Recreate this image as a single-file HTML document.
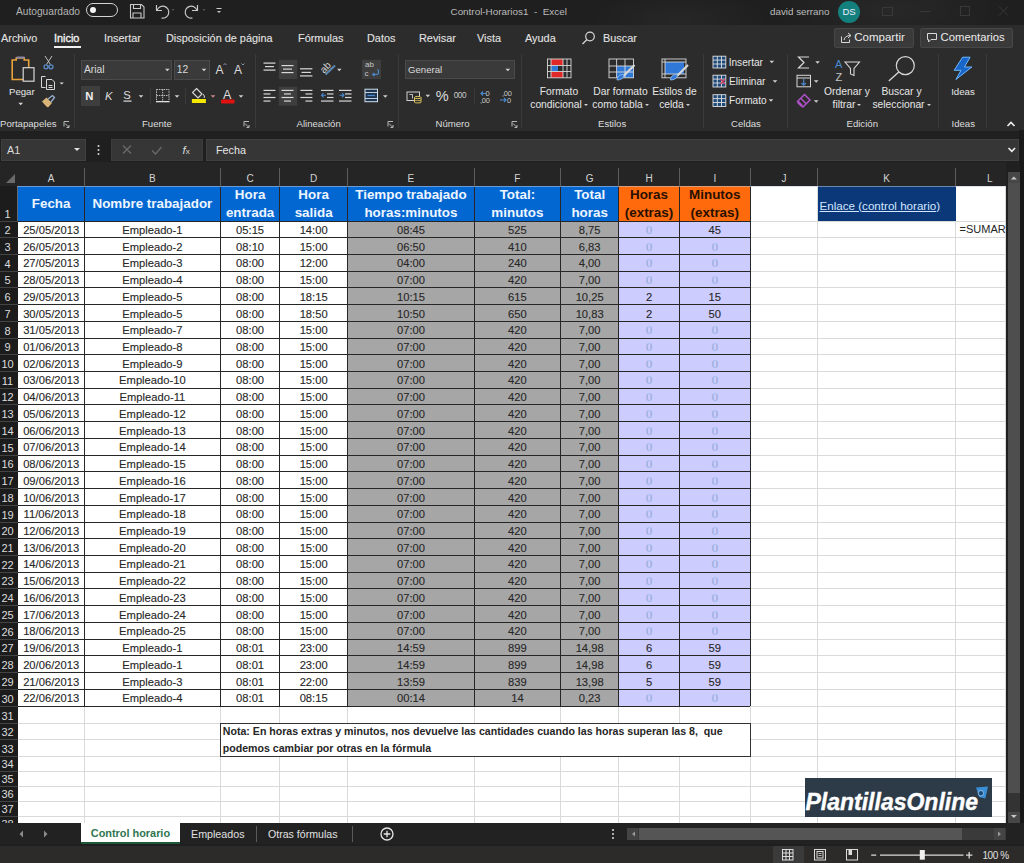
<!DOCTYPE html><html><head><meta charset="utf-8"><style>
*{margin:0;padding:0;box-sizing:border-box}
html,body{width:1024px;height:863px;overflow:hidden;background:#1f1f1f;font-family:"Liberation Sans",sans-serif}
.a{position:absolute}
.t{position:absolute;white-space:nowrap;color:#e6e6e6;font-size:11px;line-height:1}
.c{position:absolute;white-space:nowrap;font-size:11.2px;color:#2a2a2a;-webkit-text-stroke:0.12px #2a2a2a;padding-top:1.2px;text-align:center;display:flex;align-items:center;justify-content:center;overflow:hidden}
.hd{position:absolute;color:#eef6ff;font-weight:bold;font-size:13.4px;line-height:18px;padding-top:0.6px;text-align:center;display:flex;align-items:center;justify-content:center;white-space:nowrap}
svg{position:absolute;overflow:visible}
</style></head><body>

<div class="a" style="left:18.00px;top:185.50px;width:987.60px;height:637.50px;background:#fff"></div>
<div class="a" style="left:83.80px;top:185.50px;width:1px;height:637.50px;background:#dadada"></div>
<div class="a" style="left:220.00px;top:185.50px;width:1px;height:637.50px;background:#dadada"></div>
<div class="a" style="left:279.20px;top:185.50px;width:1px;height:637.50px;background:#dadada"></div>
<div class="a" style="left:347.10px;top:185.50px;width:1px;height:637.50px;background:#dadada"></div>
<div class="a" style="left:473.80px;top:185.50px;width:1px;height:637.50px;background:#dadada"></div>
<div class="a" style="left:560.00px;top:185.50px;width:1px;height:637.50px;background:#dadada"></div>
<div class="a" style="left:618.30px;top:185.50px;width:1px;height:637.50px;background:#dadada"></div>
<div class="a" style="left:678.70px;top:185.50px;width:1px;height:637.50px;background:#dadada"></div>
<div class="a" style="left:749.90px;top:185.50px;width:1px;height:637.50px;background:#dadada"></div>
<div class="a" style="left:817.10px;top:185.50px;width:1px;height:637.50px;background:#dadada"></div>
<div class="a" style="left:955.10px;top:185.50px;width:1px;height:637.50px;background:#dadada"></div>
<div class="a" style="left:1005.10px;top:185.50px;width:1px;height:637.50px;background:#dadada"></div>
<div class="a" style="left:18.00px;top:220.50px;width:987.60px;height:1px;background:#dadada"></div>
<div class="a" style="left:18.00px;top:237.22px;width:987.60px;height:1px;background:#dadada"></div>
<div class="a" style="left:18.00px;top:253.95px;width:987.60px;height:1px;background:#dadada"></div>
<div class="a" style="left:18.00px;top:270.67px;width:987.60px;height:1px;background:#dadada"></div>
<div class="a" style="left:18.00px;top:287.40px;width:987.60px;height:1px;background:#dadada"></div>
<div class="a" style="left:18.00px;top:304.12px;width:987.60px;height:1px;background:#dadada"></div>
<div class="a" style="left:18.00px;top:320.84px;width:987.60px;height:1px;background:#dadada"></div>
<div class="a" style="left:18.00px;top:337.57px;width:987.60px;height:1px;background:#dadada"></div>
<div class="a" style="left:18.00px;top:354.29px;width:987.60px;height:1px;background:#dadada"></div>
<div class="a" style="left:18.00px;top:371.02px;width:987.60px;height:1px;background:#dadada"></div>
<div class="a" style="left:18.00px;top:387.74px;width:987.60px;height:1px;background:#dadada"></div>
<div class="a" style="left:18.00px;top:404.47px;width:987.60px;height:1px;background:#dadada"></div>
<div class="a" style="left:18.00px;top:421.19px;width:987.60px;height:1px;background:#dadada"></div>
<div class="a" style="left:18.00px;top:437.91px;width:987.60px;height:1px;background:#dadada"></div>
<div class="a" style="left:18.00px;top:454.64px;width:987.60px;height:1px;background:#dadada"></div>
<div class="a" style="left:18.00px;top:471.36px;width:987.60px;height:1px;background:#dadada"></div>
<div class="a" style="left:18.00px;top:488.09px;width:987.60px;height:1px;background:#dadada"></div>
<div class="a" style="left:18.00px;top:504.81px;width:987.60px;height:1px;background:#dadada"></div>
<div class="a" style="left:18.00px;top:521.53px;width:987.60px;height:1px;background:#dadada"></div>
<div class="a" style="left:18.00px;top:538.26px;width:987.60px;height:1px;background:#dadada"></div>
<div class="a" style="left:18.00px;top:554.98px;width:987.60px;height:1px;background:#dadada"></div>
<div class="a" style="left:18.00px;top:571.71px;width:987.60px;height:1px;background:#dadada"></div>
<div class="a" style="left:18.00px;top:588.43px;width:987.60px;height:1px;background:#dadada"></div>
<div class="a" style="left:18.00px;top:605.16px;width:987.60px;height:1px;background:#dadada"></div>
<div class="a" style="left:18.00px;top:621.88px;width:987.60px;height:1px;background:#dadada"></div>
<div class="a" style="left:18.00px;top:638.60px;width:987.60px;height:1px;background:#dadada"></div>
<div class="a" style="left:18.00px;top:655.33px;width:987.60px;height:1px;background:#dadada"></div>
<div class="a" style="left:18.00px;top:672.05px;width:987.60px;height:1px;background:#dadada"></div>
<div class="a" style="left:18.00px;top:688.78px;width:987.60px;height:1px;background:#dadada"></div>
<div class="a" style="left:18.00px;top:705.50px;width:987.60px;height:1px;background:#dadada"></div>
<div class="a" style="left:18.00px;top:722.50px;width:987.60px;height:1px;background:#dadada"></div>
<div class="a" style="left:18.00px;top:739.00px;width:987.60px;height:1px;background:#dadada"></div>
<div class="a" style="left:18.00px;top:756.10px;width:987.60px;height:1px;background:#dadada"></div>
<div class="a" style="left:18.00px;top:771.10px;width:987.60px;height:1px;background:#dadada"></div>
<div class="a" style="left:18.00px;top:786.10px;width:987.60px;height:1px;background:#dadada"></div>
<div class="a" style="left:18.00px;top:801.10px;width:987.60px;height:1px;background:#dadada"></div>
<div class="a" style="left:18.00px;top:816.10px;width:987.60px;height:1px;background:#dadada"></div>
<div class="hd" style="left:18.00px;top:185.50px;width:66.30px;height:35.50px;background:#0367d2;color:#eef6ff">Fecha</div>
<div class="hd" style="left:84.30px;top:185.50px;width:136.20px;height:35.50px;background:#0367d2;color:#eef6ff">Nombre trabajador</div>
<div class="hd" style="left:220.50px;top:185.50px;width:59.20px;height:35.50px;background:#0367d2;color:#eef6ff">Hora<br>entrada</div>
<div class="hd" style="left:279.70px;top:185.50px;width:67.90px;height:35.50px;background:#0367d2;color:#eef6ff">Hora<br>salida</div>
<div class="hd" style="left:347.60px;top:185.50px;width:126.70px;height:35.50px;background:#0367d2;color:#eef6ff">Tiempo trabajado<br>horas:minutos</div>
<div class="hd" style="left:474.30px;top:185.50px;width:86.20px;height:35.50px;background:#0367d2;color:#eef6ff">Total:<br>minutos</div>
<div class="hd" style="left:560.50px;top:185.50px;width:58.30px;height:35.50px;background:#0367d2;color:#eef6ff">Total<br>horas</div>
<div class="hd" style="left:618.80px;top:185.50px;width:60.40px;height:35.50px;background:#ff6a0c;color:#2a1000">Horas<br>(extras)</div>
<div class="hd" style="left:679.20px;top:185.50px;width:71.20px;height:35.50px;background:#ff6a0c;color:#2a1000">Minutos<br>(extras)</div>
<div class="a" style="left:817.60px;top:185.50px;width:138.00px;height:35.50px;background:#0a3878"></div>
<div class="t" style="left:819.60px;top:199.50px;color:#d4e6ff;font-size:11.6px;text-decoration:underline">Enlace (control horario)</div>
<div class="c" style="left:18.00px;top:221.00px;width:66.30px;height:16.72px;background:#fff;color:#262626">25/05/2013</div>
<div class="c" style="left:84.30px;top:221.00px;width:136.20px;height:16.72px;background:#fff;color:#262626">Empleado-1</div>
<div class="c" style="left:220.50px;top:221.00px;width:59.20px;height:16.72px;background:#fff;color:#262626">05:15</div>
<div class="c" style="left:279.70px;top:221.00px;width:67.90px;height:16.72px;background:#fff;color:#262626">14:00</div>
<div class="c" style="left:347.60px;top:221.00px;width:126.70px;height:16.72px;background:#a6a6a6;color:#262626">08:45</div>
<div class="c" style="left:474.30px;top:221.00px;width:86.20px;height:16.72px;background:#a6a6a6;color:#262626">525</div>
<div class="c" style="left:560.50px;top:221.00px;width:58.30px;height:16.72px;background:#a6a6a6;color:#262626">8,75</div>
<div class="c" style="left:618.80px;top:221.00px;width:60.40px;height:16.72px;background:#ccccff;color:#a8c4f4">0</div>
<div class="c" style="left:679.20px;top:221.00px;width:71.20px;height:16.72px;background:#ccccff;color:#262626">45</div>
<div class="c" style="left:18.00px;top:237.72px;width:66.30px;height:16.72px;background:#fff;color:#262626">26/05/2013</div>
<div class="c" style="left:84.30px;top:237.72px;width:136.20px;height:16.72px;background:#fff;color:#262626">Empleado-2</div>
<div class="c" style="left:220.50px;top:237.72px;width:59.20px;height:16.72px;background:#fff;color:#262626">08:10</div>
<div class="c" style="left:279.70px;top:237.72px;width:67.90px;height:16.72px;background:#fff;color:#262626">15:00</div>
<div class="c" style="left:347.60px;top:237.72px;width:126.70px;height:16.72px;background:#a6a6a6;color:#262626">06:50</div>
<div class="c" style="left:474.30px;top:237.72px;width:86.20px;height:16.72px;background:#a6a6a6;color:#262626">410</div>
<div class="c" style="left:560.50px;top:237.72px;width:58.30px;height:16.72px;background:#a6a6a6;color:#262626">6,83</div>
<div class="c" style="left:618.80px;top:237.72px;width:60.40px;height:16.72px;background:#ccccff;color:#a8c4f4">0</div>
<div class="c" style="left:679.20px;top:237.72px;width:71.20px;height:16.72px;background:#ccccff;color:#a8c4f4">0</div>
<div class="c" style="left:18.00px;top:254.45px;width:66.30px;height:16.72px;background:#fff;color:#262626">27/05/2013</div>
<div class="c" style="left:84.30px;top:254.45px;width:136.20px;height:16.72px;background:#fff;color:#262626">Empleado-3</div>
<div class="c" style="left:220.50px;top:254.45px;width:59.20px;height:16.72px;background:#fff;color:#262626">08:00</div>
<div class="c" style="left:279.70px;top:254.45px;width:67.90px;height:16.72px;background:#fff;color:#262626">12:00</div>
<div class="c" style="left:347.60px;top:254.45px;width:126.70px;height:16.72px;background:#a6a6a6;color:#262626">04:00</div>
<div class="c" style="left:474.30px;top:254.45px;width:86.20px;height:16.72px;background:#a6a6a6;color:#262626">240</div>
<div class="c" style="left:560.50px;top:254.45px;width:58.30px;height:16.72px;background:#a6a6a6;color:#262626">4,00</div>
<div class="c" style="left:618.80px;top:254.45px;width:60.40px;height:16.72px;background:#ccccff;color:#a8c4f4">0</div>
<div class="c" style="left:679.20px;top:254.45px;width:71.20px;height:16.72px;background:#ccccff;color:#a8c4f4">0</div>
<div class="c" style="left:18.00px;top:271.17px;width:66.30px;height:16.72px;background:#fff;color:#262626">28/05/2013</div>
<div class="c" style="left:84.30px;top:271.17px;width:136.20px;height:16.72px;background:#fff;color:#262626">Empleado-4</div>
<div class="c" style="left:220.50px;top:271.17px;width:59.20px;height:16.72px;background:#fff;color:#262626">08:00</div>
<div class="c" style="left:279.70px;top:271.17px;width:67.90px;height:16.72px;background:#fff;color:#262626">15:00</div>
<div class="c" style="left:347.60px;top:271.17px;width:126.70px;height:16.72px;background:#a6a6a6;color:#262626">07:00</div>
<div class="c" style="left:474.30px;top:271.17px;width:86.20px;height:16.72px;background:#a6a6a6;color:#262626">420</div>
<div class="c" style="left:560.50px;top:271.17px;width:58.30px;height:16.72px;background:#a6a6a6;color:#262626">7,00</div>
<div class="c" style="left:618.80px;top:271.17px;width:60.40px;height:16.72px;background:#ccccff;color:#a8c4f4">0</div>
<div class="c" style="left:679.20px;top:271.17px;width:71.20px;height:16.72px;background:#ccccff;color:#a8c4f4">0</div>
<div class="c" style="left:18.00px;top:287.90px;width:66.30px;height:16.72px;background:#fff;color:#262626">29/05/2013</div>
<div class="c" style="left:84.30px;top:287.90px;width:136.20px;height:16.72px;background:#fff;color:#262626">Empleado-5</div>
<div class="c" style="left:220.50px;top:287.90px;width:59.20px;height:16.72px;background:#fff;color:#262626">08:00</div>
<div class="c" style="left:279.70px;top:287.90px;width:67.90px;height:16.72px;background:#fff;color:#262626">18:15</div>
<div class="c" style="left:347.60px;top:287.90px;width:126.70px;height:16.72px;background:#a6a6a6;color:#262626">10:15</div>
<div class="c" style="left:474.30px;top:287.90px;width:86.20px;height:16.72px;background:#a6a6a6;color:#262626">615</div>
<div class="c" style="left:560.50px;top:287.90px;width:58.30px;height:16.72px;background:#a6a6a6;color:#262626">10,25</div>
<div class="c" style="left:618.80px;top:287.90px;width:60.40px;height:16.72px;background:#ccccff;color:#262626">2</div>
<div class="c" style="left:679.20px;top:287.90px;width:71.20px;height:16.72px;background:#ccccff;color:#262626">15</div>
<div class="c" style="left:18.00px;top:304.62px;width:66.30px;height:16.72px;background:#fff;color:#262626">30/05/2013</div>
<div class="c" style="left:84.30px;top:304.62px;width:136.20px;height:16.72px;background:#fff;color:#262626">Empleado-5</div>
<div class="c" style="left:220.50px;top:304.62px;width:59.20px;height:16.72px;background:#fff;color:#262626">08:00</div>
<div class="c" style="left:279.70px;top:304.62px;width:67.90px;height:16.72px;background:#fff;color:#262626">18:50</div>
<div class="c" style="left:347.60px;top:304.62px;width:126.70px;height:16.72px;background:#a6a6a6;color:#262626">10:50</div>
<div class="c" style="left:474.30px;top:304.62px;width:86.20px;height:16.72px;background:#a6a6a6;color:#262626">650</div>
<div class="c" style="left:560.50px;top:304.62px;width:58.30px;height:16.72px;background:#a6a6a6;color:#262626">10,83</div>
<div class="c" style="left:618.80px;top:304.62px;width:60.40px;height:16.72px;background:#ccccff;color:#262626">2</div>
<div class="c" style="left:679.20px;top:304.62px;width:71.20px;height:16.72px;background:#ccccff;color:#262626">50</div>
<div class="c" style="left:18.00px;top:321.34px;width:66.30px;height:16.72px;background:#fff;color:#262626">31/05/2013</div>
<div class="c" style="left:84.30px;top:321.34px;width:136.20px;height:16.72px;background:#fff;color:#262626">Empleado-7</div>
<div class="c" style="left:220.50px;top:321.34px;width:59.20px;height:16.72px;background:#fff;color:#262626">08:00</div>
<div class="c" style="left:279.70px;top:321.34px;width:67.90px;height:16.72px;background:#fff;color:#262626">15:00</div>
<div class="c" style="left:347.60px;top:321.34px;width:126.70px;height:16.72px;background:#a6a6a6;color:#262626">07:00</div>
<div class="c" style="left:474.30px;top:321.34px;width:86.20px;height:16.72px;background:#a6a6a6;color:#262626">420</div>
<div class="c" style="left:560.50px;top:321.34px;width:58.30px;height:16.72px;background:#a6a6a6;color:#262626">7,00</div>
<div class="c" style="left:618.80px;top:321.34px;width:60.40px;height:16.72px;background:#ccccff;color:#a8c4f4">0</div>
<div class="c" style="left:679.20px;top:321.34px;width:71.20px;height:16.72px;background:#ccccff;color:#a8c4f4">0</div>
<div class="c" style="left:18.00px;top:338.07px;width:66.30px;height:16.72px;background:#fff;color:#262626">01/06/2013</div>
<div class="c" style="left:84.30px;top:338.07px;width:136.20px;height:16.72px;background:#fff;color:#262626">Empleado-8</div>
<div class="c" style="left:220.50px;top:338.07px;width:59.20px;height:16.72px;background:#fff;color:#262626">08:00</div>
<div class="c" style="left:279.70px;top:338.07px;width:67.90px;height:16.72px;background:#fff;color:#262626">15:00</div>
<div class="c" style="left:347.60px;top:338.07px;width:126.70px;height:16.72px;background:#a6a6a6;color:#262626">07:00</div>
<div class="c" style="left:474.30px;top:338.07px;width:86.20px;height:16.72px;background:#a6a6a6;color:#262626">420</div>
<div class="c" style="left:560.50px;top:338.07px;width:58.30px;height:16.72px;background:#a6a6a6;color:#262626">7,00</div>
<div class="c" style="left:618.80px;top:338.07px;width:60.40px;height:16.72px;background:#ccccff;color:#a8c4f4">0</div>
<div class="c" style="left:679.20px;top:338.07px;width:71.20px;height:16.72px;background:#ccccff;color:#a8c4f4">0</div>
<div class="c" style="left:18.00px;top:354.79px;width:66.30px;height:16.72px;background:#fff;color:#262626">02/06/2013</div>
<div class="c" style="left:84.30px;top:354.79px;width:136.20px;height:16.72px;background:#fff;color:#262626">Empleado-9</div>
<div class="c" style="left:220.50px;top:354.79px;width:59.20px;height:16.72px;background:#fff;color:#262626">08:00</div>
<div class="c" style="left:279.70px;top:354.79px;width:67.90px;height:16.72px;background:#fff;color:#262626">15:00</div>
<div class="c" style="left:347.60px;top:354.79px;width:126.70px;height:16.72px;background:#a6a6a6;color:#262626">07:00</div>
<div class="c" style="left:474.30px;top:354.79px;width:86.20px;height:16.72px;background:#a6a6a6;color:#262626">420</div>
<div class="c" style="left:560.50px;top:354.79px;width:58.30px;height:16.72px;background:#a6a6a6;color:#262626">7,00</div>
<div class="c" style="left:618.80px;top:354.79px;width:60.40px;height:16.72px;background:#ccccff;color:#a8c4f4">0</div>
<div class="c" style="left:679.20px;top:354.79px;width:71.20px;height:16.72px;background:#ccccff;color:#a8c4f4">0</div>
<div class="c" style="left:18.00px;top:371.52px;width:66.30px;height:16.72px;background:#fff;color:#262626">03/06/2013</div>
<div class="c" style="left:84.30px;top:371.52px;width:136.20px;height:16.72px;background:#fff;color:#262626">Empleado-10</div>
<div class="c" style="left:220.50px;top:371.52px;width:59.20px;height:16.72px;background:#fff;color:#262626">08:00</div>
<div class="c" style="left:279.70px;top:371.52px;width:67.90px;height:16.72px;background:#fff;color:#262626">15:00</div>
<div class="c" style="left:347.60px;top:371.52px;width:126.70px;height:16.72px;background:#a6a6a6;color:#262626">07:00</div>
<div class="c" style="left:474.30px;top:371.52px;width:86.20px;height:16.72px;background:#a6a6a6;color:#262626">420</div>
<div class="c" style="left:560.50px;top:371.52px;width:58.30px;height:16.72px;background:#a6a6a6;color:#262626">7,00</div>
<div class="c" style="left:618.80px;top:371.52px;width:60.40px;height:16.72px;background:#ccccff;color:#a8c4f4">0</div>
<div class="c" style="left:679.20px;top:371.52px;width:71.20px;height:16.72px;background:#ccccff;color:#a8c4f4">0</div>
<div class="c" style="left:18.00px;top:388.24px;width:66.30px;height:16.72px;background:#fff;color:#262626">04/06/2013</div>
<div class="c" style="left:84.30px;top:388.24px;width:136.20px;height:16.72px;background:#fff;color:#262626">Empleado-11</div>
<div class="c" style="left:220.50px;top:388.24px;width:59.20px;height:16.72px;background:#fff;color:#262626">08:00</div>
<div class="c" style="left:279.70px;top:388.24px;width:67.90px;height:16.72px;background:#fff;color:#262626">15:00</div>
<div class="c" style="left:347.60px;top:388.24px;width:126.70px;height:16.72px;background:#a6a6a6;color:#262626">07:00</div>
<div class="c" style="left:474.30px;top:388.24px;width:86.20px;height:16.72px;background:#a6a6a6;color:#262626">420</div>
<div class="c" style="left:560.50px;top:388.24px;width:58.30px;height:16.72px;background:#a6a6a6;color:#262626">7,00</div>
<div class="c" style="left:618.80px;top:388.24px;width:60.40px;height:16.72px;background:#ccccff;color:#a8c4f4">0</div>
<div class="c" style="left:679.20px;top:388.24px;width:71.20px;height:16.72px;background:#ccccff;color:#a8c4f4">0</div>
<div class="c" style="left:18.00px;top:404.97px;width:66.30px;height:16.72px;background:#fff;color:#262626">05/06/2013</div>
<div class="c" style="left:84.30px;top:404.97px;width:136.20px;height:16.72px;background:#fff;color:#262626">Empleado-12</div>
<div class="c" style="left:220.50px;top:404.97px;width:59.20px;height:16.72px;background:#fff;color:#262626">08:00</div>
<div class="c" style="left:279.70px;top:404.97px;width:67.90px;height:16.72px;background:#fff;color:#262626">15:00</div>
<div class="c" style="left:347.60px;top:404.97px;width:126.70px;height:16.72px;background:#a6a6a6;color:#262626">07:00</div>
<div class="c" style="left:474.30px;top:404.97px;width:86.20px;height:16.72px;background:#a6a6a6;color:#262626">420</div>
<div class="c" style="left:560.50px;top:404.97px;width:58.30px;height:16.72px;background:#a6a6a6;color:#262626">7,00</div>
<div class="c" style="left:618.80px;top:404.97px;width:60.40px;height:16.72px;background:#ccccff;color:#a8c4f4">0</div>
<div class="c" style="left:679.20px;top:404.97px;width:71.20px;height:16.72px;background:#ccccff;color:#a8c4f4">0</div>
<div class="c" style="left:18.00px;top:421.69px;width:66.30px;height:16.72px;background:#fff;color:#262626">06/06/2013</div>
<div class="c" style="left:84.30px;top:421.69px;width:136.20px;height:16.72px;background:#fff;color:#262626">Empleado-13</div>
<div class="c" style="left:220.50px;top:421.69px;width:59.20px;height:16.72px;background:#fff;color:#262626">08:00</div>
<div class="c" style="left:279.70px;top:421.69px;width:67.90px;height:16.72px;background:#fff;color:#262626">15:00</div>
<div class="c" style="left:347.60px;top:421.69px;width:126.70px;height:16.72px;background:#a6a6a6;color:#262626">07:00</div>
<div class="c" style="left:474.30px;top:421.69px;width:86.20px;height:16.72px;background:#a6a6a6;color:#262626">420</div>
<div class="c" style="left:560.50px;top:421.69px;width:58.30px;height:16.72px;background:#a6a6a6;color:#262626">7,00</div>
<div class="c" style="left:618.80px;top:421.69px;width:60.40px;height:16.72px;background:#ccccff;color:#a8c4f4">0</div>
<div class="c" style="left:679.20px;top:421.69px;width:71.20px;height:16.72px;background:#ccccff;color:#a8c4f4">0</div>
<div class="c" style="left:18.00px;top:438.41px;width:66.30px;height:16.72px;background:#fff;color:#262626">07/06/2013</div>
<div class="c" style="left:84.30px;top:438.41px;width:136.20px;height:16.72px;background:#fff;color:#262626">Empleado-14</div>
<div class="c" style="left:220.50px;top:438.41px;width:59.20px;height:16.72px;background:#fff;color:#262626">08:00</div>
<div class="c" style="left:279.70px;top:438.41px;width:67.90px;height:16.72px;background:#fff;color:#262626">15:00</div>
<div class="c" style="left:347.60px;top:438.41px;width:126.70px;height:16.72px;background:#a6a6a6;color:#262626">07:00</div>
<div class="c" style="left:474.30px;top:438.41px;width:86.20px;height:16.72px;background:#a6a6a6;color:#262626">420</div>
<div class="c" style="left:560.50px;top:438.41px;width:58.30px;height:16.72px;background:#a6a6a6;color:#262626">7,00</div>
<div class="c" style="left:618.80px;top:438.41px;width:60.40px;height:16.72px;background:#ccccff;color:#a8c4f4">0</div>
<div class="c" style="left:679.20px;top:438.41px;width:71.20px;height:16.72px;background:#ccccff;color:#a8c4f4">0</div>
<div class="c" style="left:18.00px;top:455.14px;width:66.30px;height:16.72px;background:#fff;color:#262626">08/06/2013</div>
<div class="c" style="left:84.30px;top:455.14px;width:136.20px;height:16.72px;background:#fff;color:#262626">Empleado-15</div>
<div class="c" style="left:220.50px;top:455.14px;width:59.20px;height:16.72px;background:#fff;color:#262626">08:00</div>
<div class="c" style="left:279.70px;top:455.14px;width:67.90px;height:16.72px;background:#fff;color:#262626">15:00</div>
<div class="c" style="left:347.60px;top:455.14px;width:126.70px;height:16.72px;background:#a6a6a6;color:#262626">07:00</div>
<div class="c" style="left:474.30px;top:455.14px;width:86.20px;height:16.72px;background:#a6a6a6;color:#262626">420</div>
<div class="c" style="left:560.50px;top:455.14px;width:58.30px;height:16.72px;background:#a6a6a6;color:#262626">7,00</div>
<div class="c" style="left:618.80px;top:455.14px;width:60.40px;height:16.72px;background:#ccccff;color:#a8c4f4">0</div>
<div class="c" style="left:679.20px;top:455.14px;width:71.20px;height:16.72px;background:#ccccff;color:#a8c4f4">0</div>
<div class="c" style="left:18.00px;top:471.86px;width:66.30px;height:16.72px;background:#fff;color:#262626">09/06/2013</div>
<div class="c" style="left:84.30px;top:471.86px;width:136.20px;height:16.72px;background:#fff;color:#262626">Empleado-16</div>
<div class="c" style="left:220.50px;top:471.86px;width:59.20px;height:16.72px;background:#fff;color:#262626">08:00</div>
<div class="c" style="left:279.70px;top:471.86px;width:67.90px;height:16.72px;background:#fff;color:#262626">15:00</div>
<div class="c" style="left:347.60px;top:471.86px;width:126.70px;height:16.72px;background:#a6a6a6;color:#262626">07:00</div>
<div class="c" style="left:474.30px;top:471.86px;width:86.20px;height:16.72px;background:#a6a6a6;color:#262626">420</div>
<div class="c" style="left:560.50px;top:471.86px;width:58.30px;height:16.72px;background:#a6a6a6;color:#262626">7,00</div>
<div class="c" style="left:618.80px;top:471.86px;width:60.40px;height:16.72px;background:#ccccff;color:#a8c4f4">0</div>
<div class="c" style="left:679.20px;top:471.86px;width:71.20px;height:16.72px;background:#ccccff;color:#a8c4f4">0</div>
<div class="c" style="left:18.00px;top:488.59px;width:66.30px;height:16.72px;background:#fff;color:#262626">10/06/2013</div>
<div class="c" style="left:84.30px;top:488.59px;width:136.20px;height:16.72px;background:#fff;color:#262626">Empleado-17</div>
<div class="c" style="left:220.50px;top:488.59px;width:59.20px;height:16.72px;background:#fff;color:#262626">08:00</div>
<div class="c" style="left:279.70px;top:488.59px;width:67.90px;height:16.72px;background:#fff;color:#262626">15:00</div>
<div class="c" style="left:347.60px;top:488.59px;width:126.70px;height:16.72px;background:#a6a6a6;color:#262626">07:00</div>
<div class="c" style="left:474.30px;top:488.59px;width:86.20px;height:16.72px;background:#a6a6a6;color:#262626">420</div>
<div class="c" style="left:560.50px;top:488.59px;width:58.30px;height:16.72px;background:#a6a6a6;color:#262626">7,00</div>
<div class="c" style="left:618.80px;top:488.59px;width:60.40px;height:16.72px;background:#ccccff;color:#a8c4f4">0</div>
<div class="c" style="left:679.20px;top:488.59px;width:71.20px;height:16.72px;background:#ccccff;color:#a8c4f4">0</div>
<div class="c" style="left:18.00px;top:505.31px;width:66.30px;height:16.72px;background:#fff;color:#262626">11/06/2013</div>
<div class="c" style="left:84.30px;top:505.31px;width:136.20px;height:16.72px;background:#fff;color:#262626">Empleado-18</div>
<div class="c" style="left:220.50px;top:505.31px;width:59.20px;height:16.72px;background:#fff;color:#262626">08:00</div>
<div class="c" style="left:279.70px;top:505.31px;width:67.90px;height:16.72px;background:#fff;color:#262626">15:00</div>
<div class="c" style="left:347.60px;top:505.31px;width:126.70px;height:16.72px;background:#a6a6a6;color:#262626">07:00</div>
<div class="c" style="left:474.30px;top:505.31px;width:86.20px;height:16.72px;background:#a6a6a6;color:#262626">420</div>
<div class="c" style="left:560.50px;top:505.31px;width:58.30px;height:16.72px;background:#a6a6a6;color:#262626">7,00</div>
<div class="c" style="left:618.80px;top:505.31px;width:60.40px;height:16.72px;background:#ccccff;color:#a8c4f4">0</div>
<div class="c" style="left:679.20px;top:505.31px;width:71.20px;height:16.72px;background:#ccccff;color:#a8c4f4">0</div>
<div class="c" style="left:18.00px;top:522.03px;width:66.30px;height:16.72px;background:#fff;color:#262626">12/06/2013</div>
<div class="c" style="left:84.30px;top:522.03px;width:136.20px;height:16.72px;background:#fff;color:#262626">Empleado-19</div>
<div class="c" style="left:220.50px;top:522.03px;width:59.20px;height:16.72px;background:#fff;color:#262626">08:00</div>
<div class="c" style="left:279.70px;top:522.03px;width:67.90px;height:16.72px;background:#fff;color:#262626">15:00</div>
<div class="c" style="left:347.60px;top:522.03px;width:126.70px;height:16.72px;background:#a6a6a6;color:#262626">07:00</div>
<div class="c" style="left:474.30px;top:522.03px;width:86.20px;height:16.72px;background:#a6a6a6;color:#262626">420</div>
<div class="c" style="left:560.50px;top:522.03px;width:58.30px;height:16.72px;background:#a6a6a6;color:#262626">7,00</div>
<div class="c" style="left:618.80px;top:522.03px;width:60.40px;height:16.72px;background:#ccccff;color:#a8c4f4">0</div>
<div class="c" style="left:679.20px;top:522.03px;width:71.20px;height:16.72px;background:#ccccff;color:#a8c4f4">0</div>
<div class="c" style="left:18.00px;top:538.76px;width:66.30px;height:16.72px;background:#fff;color:#262626">13/06/2013</div>
<div class="c" style="left:84.30px;top:538.76px;width:136.20px;height:16.72px;background:#fff;color:#262626">Empleado-20</div>
<div class="c" style="left:220.50px;top:538.76px;width:59.20px;height:16.72px;background:#fff;color:#262626">08:00</div>
<div class="c" style="left:279.70px;top:538.76px;width:67.90px;height:16.72px;background:#fff;color:#262626">15:00</div>
<div class="c" style="left:347.60px;top:538.76px;width:126.70px;height:16.72px;background:#a6a6a6;color:#262626">07:00</div>
<div class="c" style="left:474.30px;top:538.76px;width:86.20px;height:16.72px;background:#a6a6a6;color:#262626">420</div>
<div class="c" style="left:560.50px;top:538.76px;width:58.30px;height:16.72px;background:#a6a6a6;color:#262626">7,00</div>
<div class="c" style="left:618.80px;top:538.76px;width:60.40px;height:16.72px;background:#ccccff;color:#a8c4f4">0</div>
<div class="c" style="left:679.20px;top:538.76px;width:71.20px;height:16.72px;background:#ccccff;color:#a8c4f4">0</div>
<div class="c" style="left:18.00px;top:555.48px;width:66.30px;height:16.72px;background:#fff;color:#262626">14/06/2013</div>
<div class="c" style="left:84.30px;top:555.48px;width:136.20px;height:16.72px;background:#fff;color:#262626">Empleado-21</div>
<div class="c" style="left:220.50px;top:555.48px;width:59.20px;height:16.72px;background:#fff;color:#262626">08:00</div>
<div class="c" style="left:279.70px;top:555.48px;width:67.90px;height:16.72px;background:#fff;color:#262626">15:00</div>
<div class="c" style="left:347.60px;top:555.48px;width:126.70px;height:16.72px;background:#a6a6a6;color:#262626">07:00</div>
<div class="c" style="left:474.30px;top:555.48px;width:86.20px;height:16.72px;background:#a6a6a6;color:#262626">420</div>
<div class="c" style="left:560.50px;top:555.48px;width:58.30px;height:16.72px;background:#a6a6a6;color:#262626">7,00</div>
<div class="c" style="left:618.80px;top:555.48px;width:60.40px;height:16.72px;background:#ccccff;color:#a8c4f4">0</div>
<div class="c" style="left:679.20px;top:555.48px;width:71.20px;height:16.72px;background:#ccccff;color:#a8c4f4">0</div>
<div class="c" style="left:18.00px;top:572.21px;width:66.30px;height:16.72px;background:#fff;color:#262626">15/06/2013</div>
<div class="c" style="left:84.30px;top:572.21px;width:136.20px;height:16.72px;background:#fff;color:#262626">Empleado-22</div>
<div class="c" style="left:220.50px;top:572.21px;width:59.20px;height:16.72px;background:#fff;color:#262626">08:00</div>
<div class="c" style="left:279.70px;top:572.21px;width:67.90px;height:16.72px;background:#fff;color:#262626">15:00</div>
<div class="c" style="left:347.60px;top:572.21px;width:126.70px;height:16.72px;background:#a6a6a6;color:#262626">07:00</div>
<div class="c" style="left:474.30px;top:572.21px;width:86.20px;height:16.72px;background:#a6a6a6;color:#262626">420</div>
<div class="c" style="left:560.50px;top:572.21px;width:58.30px;height:16.72px;background:#a6a6a6;color:#262626">7,00</div>
<div class="c" style="left:618.80px;top:572.21px;width:60.40px;height:16.72px;background:#ccccff;color:#a8c4f4">0</div>
<div class="c" style="left:679.20px;top:572.21px;width:71.20px;height:16.72px;background:#ccccff;color:#a8c4f4">0</div>
<div class="c" style="left:18.00px;top:588.93px;width:66.30px;height:16.72px;background:#fff;color:#262626">16/06/2013</div>
<div class="c" style="left:84.30px;top:588.93px;width:136.20px;height:16.72px;background:#fff;color:#262626">Empleado-23</div>
<div class="c" style="left:220.50px;top:588.93px;width:59.20px;height:16.72px;background:#fff;color:#262626">08:00</div>
<div class="c" style="left:279.70px;top:588.93px;width:67.90px;height:16.72px;background:#fff;color:#262626">15:00</div>
<div class="c" style="left:347.60px;top:588.93px;width:126.70px;height:16.72px;background:#a6a6a6;color:#262626">07:00</div>
<div class="c" style="left:474.30px;top:588.93px;width:86.20px;height:16.72px;background:#a6a6a6;color:#262626">420</div>
<div class="c" style="left:560.50px;top:588.93px;width:58.30px;height:16.72px;background:#a6a6a6;color:#262626">7,00</div>
<div class="c" style="left:618.80px;top:588.93px;width:60.40px;height:16.72px;background:#ccccff;color:#a8c4f4">0</div>
<div class="c" style="left:679.20px;top:588.93px;width:71.20px;height:16.72px;background:#ccccff;color:#a8c4f4">0</div>
<div class="c" style="left:18.00px;top:605.66px;width:66.30px;height:16.72px;background:#fff;color:#262626">17/06/2013</div>
<div class="c" style="left:84.30px;top:605.66px;width:136.20px;height:16.72px;background:#fff;color:#262626">Empleado-24</div>
<div class="c" style="left:220.50px;top:605.66px;width:59.20px;height:16.72px;background:#fff;color:#262626">08:00</div>
<div class="c" style="left:279.70px;top:605.66px;width:67.90px;height:16.72px;background:#fff;color:#262626">15:00</div>
<div class="c" style="left:347.60px;top:605.66px;width:126.70px;height:16.72px;background:#a6a6a6;color:#262626">07:00</div>
<div class="c" style="left:474.30px;top:605.66px;width:86.20px;height:16.72px;background:#a6a6a6;color:#262626">420</div>
<div class="c" style="left:560.50px;top:605.66px;width:58.30px;height:16.72px;background:#a6a6a6;color:#262626">7,00</div>
<div class="c" style="left:618.80px;top:605.66px;width:60.40px;height:16.72px;background:#ccccff;color:#a8c4f4">0</div>
<div class="c" style="left:679.20px;top:605.66px;width:71.20px;height:16.72px;background:#ccccff;color:#a8c4f4">0</div>
<div class="c" style="left:18.00px;top:622.38px;width:66.30px;height:16.72px;background:#fff;color:#262626">18/06/2013</div>
<div class="c" style="left:84.30px;top:622.38px;width:136.20px;height:16.72px;background:#fff;color:#262626">Empleado-25</div>
<div class="c" style="left:220.50px;top:622.38px;width:59.20px;height:16.72px;background:#fff;color:#262626">08:00</div>
<div class="c" style="left:279.70px;top:622.38px;width:67.90px;height:16.72px;background:#fff;color:#262626">15:00</div>
<div class="c" style="left:347.60px;top:622.38px;width:126.70px;height:16.72px;background:#a6a6a6;color:#262626">07:00</div>
<div class="c" style="left:474.30px;top:622.38px;width:86.20px;height:16.72px;background:#a6a6a6;color:#262626">420</div>
<div class="c" style="left:560.50px;top:622.38px;width:58.30px;height:16.72px;background:#a6a6a6;color:#262626">7,00</div>
<div class="c" style="left:618.80px;top:622.38px;width:60.40px;height:16.72px;background:#ccccff;color:#a8c4f4">0</div>
<div class="c" style="left:679.20px;top:622.38px;width:71.20px;height:16.72px;background:#ccccff;color:#a8c4f4">0</div>
<div class="c" style="left:18.00px;top:639.10px;width:66.30px;height:16.72px;background:#fff;color:#262626">19/06/2013</div>
<div class="c" style="left:84.30px;top:639.10px;width:136.20px;height:16.72px;background:#fff;color:#262626">Empleado-1</div>
<div class="c" style="left:220.50px;top:639.10px;width:59.20px;height:16.72px;background:#fff;color:#262626">08:01</div>
<div class="c" style="left:279.70px;top:639.10px;width:67.90px;height:16.72px;background:#fff;color:#262626">23:00</div>
<div class="c" style="left:347.60px;top:639.10px;width:126.70px;height:16.72px;background:#a6a6a6;color:#262626">14:59</div>
<div class="c" style="left:474.30px;top:639.10px;width:86.20px;height:16.72px;background:#a6a6a6;color:#262626">899</div>
<div class="c" style="left:560.50px;top:639.10px;width:58.30px;height:16.72px;background:#a6a6a6;color:#262626">14,98</div>
<div class="c" style="left:618.80px;top:639.10px;width:60.40px;height:16.72px;background:#ccccff;color:#262626">6</div>
<div class="c" style="left:679.20px;top:639.10px;width:71.20px;height:16.72px;background:#ccccff;color:#262626">59</div>
<div class="c" style="left:18.00px;top:655.83px;width:66.30px;height:16.72px;background:#fff;color:#262626">20/06/2013</div>
<div class="c" style="left:84.30px;top:655.83px;width:136.20px;height:16.72px;background:#fff;color:#262626">Empleado-1</div>
<div class="c" style="left:220.50px;top:655.83px;width:59.20px;height:16.72px;background:#fff;color:#262626">08:01</div>
<div class="c" style="left:279.70px;top:655.83px;width:67.90px;height:16.72px;background:#fff;color:#262626">23:00</div>
<div class="c" style="left:347.60px;top:655.83px;width:126.70px;height:16.72px;background:#a6a6a6;color:#262626">14:59</div>
<div class="c" style="left:474.30px;top:655.83px;width:86.20px;height:16.72px;background:#a6a6a6;color:#262626">899</div>
<div class="c" style="left:560.50px;top:655.83px;width:58.30px;height:16.72px;background:#a6a6a6;color:#262626">14,98</div>
<div class="c" style="left:618.80px;top:655.83px;width:60.40px;height:16.72px;background:#ccccff;color:#262626">6</div>
<div class="c" style="left:679.20px;top:655.83px;width:71.20px;height:16.72px;background:#ccccff;color:#262626">59</div>
<div class="c" style="left:18.00px;top:672.55px;width:66.30px;height:16.72px;background:#fff;color:#262626">21/06/2013</div>
<div class="c" style="left:84.30px;top:672.55px;width:136.20px;height:16.72px;background:#fff;color:#262626">Empleado-3</div>
<div class="c" style="left:220.50px;top:672.55px;width:59.20px;height:16.72px;background:#fff;color:#262626">08:01</div>
<div class="c" style="left:279.70px;top:672.55px;width:67.90px;height:16.72px;background:#fff;color:#262626">22:00</div>
<div class="c" style="left:347.60px;top:672.55px;width:126.70px;height:16.72px;background:#a6a6a6;color:#262626">13:59</div>
<div class="c" style="left:474.30px;top:672.55px;width:86.20px;height:16.72px;background:#a6a6a6;color:#262626">839</div>
<div class="c" style="left:560.50px;top:672.55px;width:58.30px;height:16.72px;background:#a6a6a6;color:#262626">13,98</div>
<div class="c" style="left:618.80px;top:672.55px;width:60.40px;height:16.72px;background:#ccccff;color:#262626">5</div>
<div class="c" style="left:679.20px;top:672.55px;width:71.20px;height:16.72px;background:#ccccff;color:#262626">59</div>
<div class="c" style="left:18.00px;top:689.28px;width:66.30px;height:16.72px;background:#fff;color:#262626">22/06/2013</div>
<div class="c" style="left:84.30px;top:689.28px;width:136.20px;height:16.72px;background:#fff;color:#262626">Empleado-4</div>
<div class="c" style="left:220.50px;top:689.28px;width:59.20px;height:16.72px;background:#fff;color:#262626">08:01</div>
<div class="c" style="left:279.70px;top:689.28px;width:67.90px;height:16.72px;background:#fff;color:#262626">08:15</div>
<div class="c" style="left:347.60px;top:689.28px;width:126.70px;height:16.72px;background:#a6a6a6;color:#262626">00:14</div>
<div class="c" style="left:474.30px;top:689.28px;width:86.20px;height:16.72px;background:#a6a6a6;color:#262626">14</div>
<div class="c" style="left:560.50px;top:689.28px;width:58.30px;height:16.72px;background:#a6a6a6;color:#262626">0,23</div>
<div class="c" style="left:618.80px;top:689.28px;width:60.40px;height:16.72px;background:#ccccff;color:#a8c4f4">0</div>
<div class="c" style="left:679.20px;top:689.28px;width:71.20px;height:16.72px;background:#ccccff;color:#a8c4f4">0</div>
<div class="a" style="left:84px;top:185.50px;width:1px;height:520.50px;background:#262626"></div>
<div class="a" style="left:220px;top:185.50px;width:1px;height:520.50px;background:#262626"></div>
<div class="a" style="left:279px;top:185.50px;width:1px;height:520.50px;background:#262626"></div>
<div class="a" style="left:347px;top:185.50px;width:1px;height:520.50px;background:#262626"></div>
<div class="a" style="left:474px;top:185.50px;width:1px;height:520.50px;background:#262626"></div>
<div class="a" style="left:560px;top:185.50px;width:1px;height:520.50px;background:#262626"></div>
<div class="a" style="left:618px;top:185.50px;width:1px;height:520.50px;background:#262626"></div>
<div class="a" style="left:679px;top:185.50px;width:1px;height:520.50px;background:#262626"></div>
<div class="a" style="left:750px;top:185.50px;width:1px;height:520.50px;background:#262626"></div>
<div class="a" style="left:18.00px;top:221px;width:732.40px;height:1px;background:#262626"></div>
<div class="a" style="left:18.00px;top:237px;width:732.40px;height:1px;background:#262626"></div>
<div class="a" style="left:18.00px;top:254px;width:732.40px;height:1px;background:#262626"></div>
<div class="a" style="left:18.00px;top:271px;width:732.40px;height:1px;background:#262626"></div>
<div class="a" style="left:18.00px;top:287px;width:732.40px;height:1px;background:#262626"></div>
<div class="a" style="left:18.00px;top:304px;width:732.40px;height:1px;background:#262626"></div>
<div class="a" style="left:18.00px;top:321px;width:732.40px;height:1px;background:#262626"></div>
<div class="a" style="left:18.00px;top:338px;width:732.40px;height:1px;background:#262626"></div>
<div class="a" style="left:18.00px;top:354px;width:732.40px;height:1px;background:#262626"></div>
<div class="a" style="left:18.00px;top:371px;width:732.40px;height:1px;background:#262626"></div>
<div class="a" style="left:18.00px;top:388px;width:732.40px;height:1px;background:#262626"></div>
<div class="a" style="left:18.00px;top:404px;width:732.40px;height:1px;background:#262626"></div>
<div class="a" style="left:18.00px;top:421px;width:732.40px;height:1px;background:#262626"></div>
<div class="a" style="left:18.00px;top:438px;width:732.40px;height:1px;background:#262626"></div>
<div class="a" style="left:18.00px;top:455px;width:732.40px;height:1px;background:#262626"></div>
<div class="a" style="left:18.00px;top:471px;width:732.40px;height:1px;background:#262626"></div>
<div class="a" style="left:18.00px;top:488px;width:732.40px;height:1px;background:#262626"></div>
<div class="a" style="left:18.00px;top:505px;width:732.40px;height:1px;background:#262626"></div>
<div class="a" style="left:18.00px;top:522px;width:732.40px;height:1px;background:#262626"></div>
<div class="a" style="left:18.00px;top:538px;width:732.40px;height:1px;background:#262626"></div>
<div class="a" style="left:18.00px;top:555px;width:732.40px;height:1px;background:#262626"></div>
<div class="a" style="left:18.00px;top:572px;width:732.40px;height:1px;background:#262626"></div>
<div class="a" style="left:18.00px;top:588px;width:732.40px;height:1px;background:#262626"></div>
<div class="a" style="left:18.00px;top:605px;width:732.40px;height:1px;background:#262626"></div>
<div class="a" style="left:18.00px;top:622px;width:732.40px;height:1px;background:#262626"></div>
<div class="a" style="left:18.00px;top:639px;width:732.40px;height:1px;background:#262626"></div>
<div class="a" style="left:18.00px;top:655px;width:732.40px;height:1px;background:#262626"></div>
<div class="a" style="left:18.00px;top:672px;width:732.40px;height:1px;background:#262626"></div>
<div class="a" style="left:18.00px;top:689px;width:732.40px;height:1px;background:#262626"></div>
<div class="a" style="left:18.00px;top:706px;width:732.40px;height:1px;background:#262626"></div>
<div class="t" style="left:959.60px;top:224.00px;color:#262626">=SUMAR</div>
<div class="a" style="left:220.00px;top:722.50px;width:530.90px;height:34.60px;background:#fff;border:1px solid #333"></div>
<div class="t" style="left:222.80px;top:723.20px;color:#262626;font-weight:bold;font-size:10.6px;line-height:17px">Nota: En horas extras y minutos, nos devuelve las cantidades cuando las horas superan las 8,&nbsp; que<br>podemos cambiar por otras en la fórmula</div>
<div class="a" style="left:805px;top:777.5px;width:187px;height:39px;background:#2d3b48"></div>
<div class="t" style="left:805.5px;top:791.3px;color:#fff;font-size:23px;font-weight:bold;font-style:italic;-webkit-text-stroke:0.4px #fff">PlantillasOnline</div>
<svg style="left:0;top:0" width="1" height="1"><path d="M976 787.6l12-1.2-2.6 12-6.2-1.4z" fill="#3a8ed6"/><circle cx="980.9" cy="793.2" r="2.7" fill="#1a4a78" stroke="#9fd0ff" stroke-width="0.8"/></svg>
<div class="a" style="left:0;top:161.5px;width:1006px;height:24px;background:#252525"></div>
<div class="t" style="left:18.00px;top:174.3px;width:66.30px;text-align:center;color:#d4d4d4;font-size:10px">A</div>
<div class="a" style="left:83.80px;top:168px;width:1px;height:17.5px;background:#5c5c5c"></div>
<div class="t" style="left:84.30px;top:174.3px;width:136.20px;text-align:center;color:#d4d4d4;font-size:10px">B</div>
<div class="a" style="left:220.00px;top:168px;width:1px;height:17.5px;background:#5c5c5c"></div>
<div class="t" style="left:220.50px;top:174.3px;width:59.20px;text-align:center;color:#d4d4d4;font-size:10px">C</div>
<div class="a" style="left:279.20px;top:168px;width:1px;height:17.5px;background:#5c5c5c"></div>
<div class="t" style="left:279.70px;top:174.3px;width:67.90px;text-align:center;color:#d4d4d4;font-size:10px">D</div>
<div class="a" style="left:347.10px;top:168px;width:1px;height:17.5px;background:#5c5c5c"></div>
<div class="t" style="left:347.60px;top:174.3px;width:126.70px;text-align:center;color:#d4d4d4;font-size:10px">E</div>
<div class="a" style="left:473.80px;top:168px;width:1px;height:17.5px;background:#5c5c5c"></div>
<div class="t" style="left:474.30px;top:174.3px;width:86.20px;text-align:center;color:#d4d4d4;font-size:10px">F</div>
<div class="a" style="left:560.00px;top:168px;width:1px;height:17.5px;background:#5c5c5c"></div>
<div class="t" style="left:560.50px;top:174.3px;width:58.30px;text-align:center;color:#d4d4d4;font-size:10px">G</div>
<div class="a" style="left:618.30px;top:168px;width:1px;height:17.5px;background:#5c5c5c"></div>
<div class="t" style="left:618.80px;top:174.3px;width:60.40px;text-align:center;color:#d4d4d4;font-size:10px">H</div>
<div class="a" style="left:678.70px;top:168px;width:1px;height:17.5px;background:#5c5c5c"></div>
<div class="t" style="left:679.20px;top:174.3px;width:71.20px;text-align:center;color:#d4d4d4;font-size:10px">I</div>
<div class="a" style="left:749.90px;top:168px;width:1px;height:17.5px;background:#5c5c5c"></div>
<div class="t" style="left:750.40px;top:174.3px;width:67.20px;text-align:center;color:#d4d4d4;font-size:10px">J</div>
<div class="a" style="left:817.10px;top:168px;width:1px;height:17.5px;background:#5c5c5c"></div>
<div class="t" style="left:817.60px;top:174.3px;width:138.00px;text-align:center;color:#d4d4d4;font-size:10px">K</div>
<div class="a" style="left:955.10px;top:168px;width:1px;height:17.5px;background:#5c5c5c"></div>
<div class="t" style="left:955.60px;top:174.3px;width:68.40px;text-align:center;color:#d4d4d4;font-size:10px">L</div>
<svg style="left:0;top:0" width="1" height="1"><polygon points="6,183 15,183 15,174" fill="#6a6a6a"/></svg>
<div class="a" style="left:0;top:185.5px;width:18px;height:637.5px;background:#1c1c1c"></div>
<div class="a" style="left:17px;top:185.5px;width:988px;height:1.2px;background:rgba(190,200,215,0.55)"></div>
<div class="a" style="left:17px;top:185.5px;width:1.2px;height:36px;background:rgba(190,200,215,0.45)"></div>
<div class="a" style="left:0;top:220.50px;width:18px;height:1px;background:#444"></div>
<div class="t" style="left:-1px;top:208.50px;width:17px;text-align:center;color:#dcdcdc;font-size:11px">1</div>
<div class="a" style="left:0;top:237.22px;width:18px;height:1px;background:#444"></div>
<div class="t" style="left:-1px;top:225.22px;width:17px;text-align:center;color:#dcdcdc;font-size:11px">2</div>
<div class="a" style="left:0;top:253.95px;width:18px;height:1px;background:#444"></div>
<div class="t" style="left:-1px;top:241.95px;width:17px;text-align:center;color:#dcdcdc;font-size:11px">3</div>
<div class="a" style="left:0;top:270.67px;width:18px;height:1px;background:#444"></div>
<div class="t" style="left:-1px;top:258.67px;width:17px;text-align:center;color:#dcdcdc;font-size:11px">4</div>
<div class="a" style="left:0;top:287.40px;width:18px;height:1px;background:#444"></div>
<div class="t" style="left:-1px;top:275.40px;width:17px;text-align:center;color:#dcdcdc;font-size:11px">5</div>
<div class="a" style="left:0;top:304.12px;width:18px;height:1px;background:#444"></div>
<div class="t" style="left:-1px;top:292.12px;width:17px;text-align:center;color:#dcdcdc;font-size:11px">6</div>
<div class="a" style="left:0;top:320.84px;width:18px;height:1px;background:#444"></div>
<div class="t" style="left:-1px;top:308.84px;width:17px;text-align:center;color:#dcdcdc;font-size:11px">7</div>
<div class="a" style="left:0;top:337.57px;width:18px;height:1px;background:#444"></div>
<div class="t" style="left:-1px;top:325.57px;width:17px;text-align:center;color:#dcdcdc;font-size:11px">8</div>
<div class="a" style="left:0;top:354.29px;width:18px;height:1px;background:#444"></div>
<div class="t" style="left:-1px;top:342.29px;width:17px;text-align:center;color:#dcdcdc;font-size:11px">9</div>
<div class="a" style="left:0;top:371.02px;width:18px;height:1px;background:#444"></div>
<div class="t" style="left:-1px;top:359.02px;width:17px;text-align:center;color:#dcdcdc;font-size:11px">10</div>
<div class="a" style="left:0;top:387.74px;width:18px;height:1px;background:#444"></div>
<div class="t" style="left:-1px;top:375.74px;width:17px;text-align:center;color:#dcdcdc;font-size:11px">11</div>
<div class="a" style="left:0;top:404.47px;width:18px;height:1px;background:#444"></div>
<div class="t" style="left:-1px;top:392.47px;width:17px;text-align:center;color:#dcdcdc;font-size:11px">12</div>
<div class="a" style="left:0;top:421.19px;width:18px;height:1px;background:#444"></div>
<div class="t" style="left:-1px;top:409.19px;width:17px;text-align:center;color:#dcdcdc;font-size:11px">13</div>
<div class="a" style="left:0;top:437.91px;width:18px;height:1px;background:#444"></div>
<div class="t" style="left:-1px;top:425.91px;width:17px;text-align:center;color:#dcdcdc;font-size:11px">14</div>
<div class="a" style="left:0;top:454.64px;width:18px;height:1px;background:#444"></div>
<div class="t" style="left:-1px;top:442.64px;width:17px;text-align:center;color:#dcdcdc;font-size:11px">15</div>
<div class="a" style="left:0;top:471.36px;width:18px;height:1px;background:#444"></div>
<div class="t" style="left:-1px;top:459.36px;width:17px;text-align:center;color:#dcdcdc;font-size:11px">16</div>
<div class="a" style="left:0;top:488.09px;width:18px;height:1px;background:#444"></div>
<div class="t" style="left:-1px;top:476.09px;width:17px;text-align:center;color:#dcdcdc;font-size:11px">17</div>
<div class="a" style="left:0;top:504.81px;width:18px;height:1px;background:#444"></div>
<div class="t" style="left:-1px;top:492.81px;width:17px;text-align:center;color:#dcdcdc;font-size:11px">18</div>
<div class="a" style="left:0;top:521.53px;width:18px;height:1px;background:#444"></div>
<div class="t" style="left:-1px;top:509.53px;width:17px;text-align:center;color:#dcdcdc;font-size:11px">19</div>
<div class="a" style="left:0;top:538.26px;width:18px;height:1px;background:#444"></div>
<div class="t" style="left:-1px;top:526.26px;width:17px;text-align:center;color:#dcdcdc;font-size:11px">20</div>
<div class="a" style="left:0;top:554.98px;width:18px;height:1px;background:#444"></div>
<div class="t" style="left:-1px;top:542.98px;width:17px;text-align:center;color:#dcdcdc;font-size:11px">21</div>
<div class="a" style="left:0;top:571.71px;width:18px;height:1px;background:#444"></div>
<div class="t" style="left:-1px;top:559.71px;width:17px;text-align:center;color:#dcdcdc;font-size:11px">22</div>
<div class="a" style="left:0;top:588.43px;width:18px;height:1px;background:#444"></div>
<div class="t" style="left:-1px;top:576.43px;width:17px;text-align:center;color:#dcdcdc;font-size:11px">23</div>
<div class="a" style="left:0;top:605.16px;width:18px;height:1px;background:#444"></div>
<div class="t" style="left:-1px;top:593.16px;width:17px;text-align:center;color:#dcdcdc;font-size:11px">24</div>
<div class="a" style="left:0;top:621.88px;width:18px;height:1px;background:#444"></div>
<div class="t" style="left:-1px;top:609.88px;width:17px;text-align:center;color:#dcdcdc;font-size:11px">25</div>
<div class="a" style="left:0;top:638.60px;width:18px;height:1px;background:#444"></div>
<div class="t" style="left:-1px;top:626.60px;width:17px;text-align:center;color:#dcdcdc;font-size:11px">26</div>
<div class="a" style="left:0;top:655.33px;width:18px;height:1px;background:#444"></div>
<div class="t" style="left:-1px;top:643.33px;width:17px;text-align:center;color:#dcdcdc;font-size:11px">27</div>
<div class="a" style="left:0;top:672.05px;width:18px;height:1px;background:#444"></div>
<div class="t" style="left:-1px;top:660.05px;width:17px;text-align:center;color:#dcdcdc;font-size:11px">28</div>
<div class="a" style="left:0;top:688.78px;width:18px;height:1px;background:#444"></div>
<div class="t" style="left:-1px;top:676.78px;width:17px;text-align:center;color:#dcdcdc;font-size:11px">29</div>
<div class="a" style="left:0;top:705.50px;width:18px;height:1px;background:#444"></div>
<div class="t" style="left:-1px;top:693.50px;width:17px;text-align:center;color:#dcdcdc;font-size:11px">30</div>
<div class="a" style="left:0;top:722.50px;width:18px;height:1px;background:#444"></div>
<div class="t" style="left:-1px;top:710.50px;width:17px;text-align:center;color:#dcdcdc;font-size:11px">31</div>
<div class="a" style="left:0;top:739.00px;width:18px;height:1px;background:#444"></div>
<div class="t" style="left:-1px;top:727.00px;width:17px;text-align:center;color:#dcdcdc;font-size:11px">32</div>
<div class="a" style="left:0;top:756.10px;width:18px;height:1px;background:#444"></div>
<div class="t" style="left:-1px;top:744.10px;width:17px;text-align:center;color:#dcdcdc;font-size:11px">33</div>
<div class="a" style="left:0;top:771.10px;width:18px;height:1px;background:#444"></div>
<div class="t" style="left:-1px;top:759.10px;width:17px;text-align:center;color:#dcdcdc;font-size:11px">34</div>
<div class="a" style="left:0;top:786.10px;width:18px;height:1px;background:#444"></div>
<div class="t" style="left:-1px;top:774.10px;width:17px;text-align:center;color:#dcdcdc;font-size:11px">35</div>
<div class="a" style="left:0;top:801.10px;width:18px;height:1px;background:#444"></div>
<div class="t" style="left:-1px;top:789.10px;width:17px;text-align:center;color:#dcdcdc;font-size:11px">36</div>
<div class="a" style="left:0;top:816.10px;width:18px;height:1px;background:#444"></div>
<div class="t" style="left:-1px;top:804.10px;width:17px;text-align:center;color:#dcdcdc;font-size:11px">37</div>
<div class="a" style="left:0;top:831.10px;width:18px;height:1px;background:#444"></div>
<div class="t" style="left:-1px;top:819.10px;width:17px;text-align:center;color:#dcdcdc;font-size:11px">38</div>
<div class="a" style="left:0.00px;top:0.00px;width:1024.00px;height:24.50px;background:#1f1f1f;"></div>
<div class="a" style="left:560.00px;top:0.00px;width:464.00px;height:24.50px;background:radial-gradient(ellipse 90px 30px at 120px 20px, rgba(255,255,255,0.035), transparent), radial-gradient(ellipse 120px 40px at 330px 10px, rgba(255,255,255,0.04), transparent);"></div>
<div class="a" style="left:0.00px;top:24.50px;width:1024.00px;height:106.50px;background:#2c2c2c;"></div>
<div class="a" style="left:0.00px;top:131.00px;width:1024.00px;height:8.00px;background:#202020;"></div>
<div class="t" style="left:16.00px;top:6.50px;font-size:10.20px;color:#b4b4b4;">Autoguardado</div>
<div class="a" style="left:86.00px;top:3.20px;width:32.00px;height:13.80px;background:transparent;border:1.3px solid #d4d4d4;border-radius:7px"></div>
<div class="a" style="left:90.00px;top:7.10px;width:5.90px;height:5.90px;background:#f4f4f4;border-radius:50%"></div>
<svg style="left:0;top:0" width="1" height="1"><g fill="none" stroke="#c8c8c8" stroke-width="1.1"><path d="M130.5 4.5h11l2.5 2.5v11h-13.5z"/><path d="M133.5 4.5v4h7v-4"/><path d="M133 18v-5h8v5"/></g></svg>
<svg style="left:0;top:0" width="1" height="1"><g fill="none" stroke="#c8c8c8" stroke-width="1.2"><path d="M156.5 5v5.5h5.5"/><path d="M157 10.5a6 6 0 1 1 4.5 7.5"/><path d="M197.5 5v5.5h-5.5"/><path d="M197 10.5a6 6 0 1 0 -4.5 7.5"/></g><path d="M171.50 9.25h3.00l-1.50 1.50z" fill="#666"/><path d="M202.50 9.25h3.00l-1.50 1.50z" fill="#666"/><path d="M216.5 8.5h5" stroke="#ccc" stroke-width="1"/><path d="M217.00 11.00h4.00l-2.00 2.00z" fill="#ccc"/></svg>
<div class="t" style="left:450.50px;top:6.50px;font-size:9.90px;color:#bcbcbc;">Control-Horarios1&nbsp; -&nbsp; Excel</div>
<div class="t" style="left:770.00px;top:6.50px;font-size:9.80px;color:#bcbcbc;">david serrano</div>
<div class="a" style="left:838.00px;top:0.50px;width:22.00px;height:22.00px;background:#13807d;border-radius:50%"></div>
<div class="t" style="left:834.00px;top:7.00px;width:30px;text-align:center;font-size:9.50px;color:#eef;">DS</div>
<svg style="left:0;top:0" width="1" height="1"><g fill="none" stroke="#383838" stroke-width="1"><rect x="882.5" y="7.5" width="10" height="8"/><path d="M920 11.5h10"/><rect x="960.5" y="6.5" width="9" height="9"/><path d="M999 6.5l9 9 M1008 6.5l-9 9"/></g></svg>
<div class="t" style="left:1.00px;top:33.00px;font-size:10.90px;color:#e2e2e2;-webkit-text-stroke:0.1px #e2e2e2">Archivo</div>
<div class="t" style="left:54.00px;top:33.00px;font-size:10.90px;color:#ececec;-webkit-text-stroke:0.35px #f4f4f4">Inicio</div>
<div class="t" style="left:104.00px;top:33.00px;font-size:10.90px;color:#e2e2e2;-webkit-text-stroke:0.1px #e2e2e2">Insertar</div>
<div class="t" style="left:166.00px;top:33.00px;font-size:10.90px;color:#e2e2e2;-webkit-text-stroke:0.1px #e2e2e2">Disposición de página</div>
<div class="t" style="left:298.00px;top:33.00px;font-size:10.90px;color:#e2e2e2;-webkit-text-stroke:0.1px #e2e2e2">Fórmulas</div>
<div class="t" style="left:367.00px;top:33.00px;font-size:10.90px;color:#e2e2e2;-webkit-text-stroke:0.1px #e2e2e2">Datos</div>
<div class="t" style="left:419.00px;top:33.00px;font-size:10.90px;color:#e2e2e2;-webkit-text-stroke:0.1px #e2e2e2">Revisar</div>
<div class="t" style="left:477.00px;top:33.00px;font-size:10.90px;color:#e2e2e2;-webkit-text-stroke:0.1px #e2e2e2">Vista</div>
<div class="t" style="left:525.00px;top:33.00px;font-size:10.90px;color:#e2e2e2;-webkit-text-stroke:0.1px #e2e2e2">Ayuda</div>
<div class="t" style="left:603.00px;top:33.00px;font-size:10.90px;color:#e2e2e2;-webkit-text-stroke:0.1px #e2e2e2">Buscar</div>
<div class="a" style="left:53.50px;top:46.00px;width:27.50px;height:2.20px;background:#f0f0f0;"></div>
<svg style="left:0;top:0" width="1" height="1"><g fill="none" stroke="#d8d8d8" stroke-width="1.2"><circle cx="590" cy="36.5" r="4.3"/><path d="M587 39.5l-4.5 4.5"/></g></svg>
<div class="a" style="left:834.00px;top:27.50px;width:80.00px;height:20.50px;background:#3a3a3a;border:1px solid #474747;border-radius:2px"></div>
<div class="t" style="left:854.30px;top:32.30px;font-size:11.50px;color:#ececec;">Compartir</div>
<svg style="left:0;top:0" width="1" height="1"><g fill="none" stroke="#d8d8d8" stroke-width="1"><path d="M841.5 36.5v6h8v-3"/><path d="M844 40c0.5-3 3-4.5 6.5-4.5"/><path d="M848 33l3 2.5-3 2.5"/></g></svg>
<div class="a" style="left:920.00px;top:27.50px;width:93.00px;height:20.50px;background:#3a3a3a;border:1px solid #474747;border-radius:2px"></div>
<div class="t" style="left:940.60px;top:32.30px;font-size:11.30px;color:#ececec;">Comentarios</div>
<svg style="left:0;top:0" width="1" height="1"><g fill="none" stroke="#d8d8d8" stroke-width="1"><path d="M927.5 33.5h9v6h-5.5l-2.5 2.5v-2.5h-1z"/></g></svg>
<div class="t" style="left:0.00px;top:118.50px;font-size:9.60px;color:#dedede;">Portapapeles</div>
<div class="t" style="left:142.00px;top:118.50px;font-size:9.60px;color:#dedede;">Fuente</div>
<div class="t" style="left:296.50px;top:118.50px;font-size:9.60px;color:#dedede;">Alineación</div>
<div class="t" style="left:435.50px;top:118.50px;font-size:9.60px;color:#dedede;">Número</div>
<div class="t" style="left:598.00px;top:118.50px;font-size:9.60px;color:#dedede;">Estilos</div>
<div class="t" style="left:731.00px;top:118.50px;font-size:9.60px;color:#dedede;">Celdas</div>
<div class="t" style="left:846.50px;top:118.50px;font-size:9.60px;color:#dedede;">Edición</div>
<div class="t" style="left:951.50px;top:118.50px;font-size:9.60px;color:#dedede;">Ideas</div>
<div class="a" style="left:73.80px;top:54.00px;width:1.00px;height:74.00px;background:#3a3a3a;"></div>
<div class="a" style="left:255.00px;top:54.00px;width:1.00px;height:74.00px;background:#3a3a3a;"></div>
<div class="a" style="left:397.50px;top:54.00px;width:1.00px;height:74.00px;background:#3a3a3a;"></div>
<div class="a" style="left:520.80px;top:54.00px;width:1.00px;height:74.00px;background:#3a3a3a;"></div>
<div class="a" style="left:703.30px;top:54.00px;width:1.00px;height:74.00px;background:#3a3a3a;"></div>
<div class="a" style="left:787.00px;top:54.00px;width:1.00px;height:74.00px;background:#3a3a3a;"></div>
<div class="a" style="left:938.40px;top:54.00px;width:1.00px;height:74.00px;background:#3a3a3a;"></div>
<div class="a" style="left:986.00px;top:54.00px;width:1.00px;height:74.00px;background:#3a3a3a;"></div>
<svg style="left:0;top:0" width="1" height="1"><g fill="none" stroke="#b8b8b8" stroke-width="1"><path d="M69.0 121.5h-5v5"/><path d="M65.0 123.5l3.5 3.5"/><path d="M66.5 127.5h2.5v-2.5"/></g></svg>
<svg style="left:0;top:0" width="1" height="1"><g fill="none" stroke="#b8b8b8" stroke-width="1"><path d="M249.0 121.5h-5v5"/><path d="M245.0 123.5l3.5 3.5"/><path d="M246.5 127.5h2.5v-2.5"/></g></svg>
<svg style="left:0;top:0" width="1" height="1"><g fill="none" stroke="#b8b8b8" stroke-width="1"><path d="M393.0 121.5h-5v5"/><path d="M389.0 123.5l3.5 3.5"/><path d="M390.5 127.5h2.5v-2.5"/></g></svg>
<svg style="left:0;top:0" width="1" height="1"><g fill="none" stroke="#b8b8b8" stroke-width="1"><path d="M517.0 121.5h-5v5"/><path d="M513.0 123.5l3.5 3.5"/><path d="M514.5 127.5h2.5v-2.5"/></g></svg>
<svg style="left:0;top:0" width="1" height="1"><path d="M1007.5 126l3.5-3.5 3.5 3.5" fill="none" stroke="#f0f0f0" stroke-width="1.6"/></svg>
<svg style="left:0;top:0" width="1" height="1"><path d="M12.2 60h4v-2h8v2h4.5v19.5h-16.5z" fill="none" stroke="#e8a33c" stroke-width="1.6"/><path d="M16.5 57.5h8" stroke="#8a86a8" stroke-width="2"/><rect x="23.2" y="67.7" width="10.8" height="13.5" fill="#2c2c2c" stroke="#d8d8d8" stroke-width="1.2"/></svg>
<div class="t" style="left:9.00px;top:87.00px;font-size:9.60px;color:#e6e6e6;">Pegar</div>
<svg style="left:0;top:0" width="1" height="1"><path d="M18.40 102.85h4.60l-2.30 2.30z" fill="#d8d8d8"/></svg>
<svg style="left:0;top:0" width="1" height="1"><g fill="none" stroke="#c0c0c0" stroke-width="1"><path d="M45 56l5.5 8.5 M52 56l-5.5 8.5"/></g><g fill="none" stroke="#5a8cc8" stroke-width="1.3"><circle cx="46" cy="66.8" r="2"/><circle cx="51" cy="66.8" r="2"/></g></svg>
<svg style="left:0;top:0" width="1" height="1"><g fill="none" stroke="#d8d8d8" stroke-width="1"><path d="M45.5 76.5h-4v11h4"/><path d="M46.5 79.5h5.5l2.5 2.5v7.5h-8z"/><path d="M48.5 85.5h4 M48.5 87.5h4"/></g><path d="M59.50 82.40h4.40l-2.20 2.20z" fill="#d8d8d8"/></svg>
<svg style="left:0;top:0" width="1" height="1"><path d="M42 101.5l4.5-4 5.5 5.5-4 4.5c-2-1-4-4-6-6z" fill="#d9b57a"/><path d="M48 99l4.5-3.5 2 2-3.5 4.5" fill="none" stroke="#9ab0d0" stroke-width="1.3"/></svg>
<div class="a" style="left:81.20px;top:60.00px;width:91.30px;height:19.80px;background:#3a3a3a;border:1px solid #4a4a4a"></div>
<div class="t" style="left:84.00px;top:65.30px;font-size:10.30px;color:#dadada;">Arial</div>
<div class="a" style="left:174.30px;top:60.00px;width:35.70px;height:19.80px;background:#3a3a3a;border:1px solid #4a4a4a"></div>
<div class="t" style="left:176.80px;top:65.30px;font-size:10.30px;color:#dadada;">12</div>
<svg style="left:0;top:0" width="1" height="1"><path d="M165.00 68.85h4.60l-2.30 2.30z" fill="#d0d0d0"/><path d="M201.70 68.85h4.60l-2.30 2.30z" fill="#d0d0d0"/></svg>
<div class="t" style="left:215.50px;top:64.20px;font-size:12.00px;color:#dcdcdc;">A</div>
<div class="t" style="left:234.00px;top:64.20px;font-size:12.00px;color:#dcdcdc;">A</div>
<svg style="left:0;top:0" width="1" height="1"><g fill="none" stroke="#8aa0c0" stroke-width="0.9"><path d="M223.5 65l1.5-1.5 1.5 1.5 M241.5 63.5l1.5 1.5 1.5-1.5"/></g></svg>
<div class="a" style="left:81.00px;top:86.30px;width:18.60px;height:19.30px;background:#3e3e3e;"></div>
<div class="t" style="left:85.30px;top:90.50px;font-size:11.30px;color:#f0f0f0;font-weight:bold">N</div>
<div class="t" style="left:105.00px;top:90.50px;font-size:11.30px;color:#dcdcdc;font-style:italic">K</div>
<div class="t" style="left:123.30px;top:89.50px;font-size:11.30px;color:#dcdcdc;">S</div>
<svg style="left:0;top:0" width="1" height="1"><rect x="123.5" y="100.5" width="8" height="1.2" fill="#dcdcdc"/><path d="M138.70 95.35h4.60l-2.30 2.30z" fill="#d0d0d0"/><path d="M174.70 95.35h4.60l-2.30 2.30z" fill="#d0d0d0"/><path d="M210.70 95.35h4.60l-2.30 2.30z" fill="#c88"/><path d="M238.70 95.35h4.60l-2.30 2.30z" fill="#d0d0d0"/></svg>
<div class="a" style="left:150.20px;top:88.00px;width:1.00px;height:16.00px;background:#3a3a3a;"></div>
<div class="a" style="left:185.40px;top:88.00px;width:1.00px;height:16.00px;background:#3a3a3a;"></div>
<svg style="left:0;top:0" width="1" height="1"><g fill="none" stroke="#d8d8d8" stroke-width="0.9" stroke-dasharray="1.4 1"><rect x="156.5" y="89.5" width="12.5" height="12"/><path d="M162.7 89.5v12 M156.5 95.5h12.5"/></g><rect x="156" y="101" width="13.5" height="1.3" fill="#e0e0e0"/></svg>
<svg style="left:0;top:0" width="1" height="1"><path d="M196.5 88.5l5.5 5.5-4 4-5.5-5.5z" fill="none" stroke="#dcdcdc" stroke-width="1.1"/><path d="M203 94c1 1 2 3 1 4" fill="none" stroke="#dcdcdc" stroke-width="1"/><rect x="191.9" y="99" width="14" height="4" fill="#f5e800"/></svg>
<div class="t" style="left:223.00px;top:88.80px;font-size:12.50px;color:#dcdcdc;">A</div>
<svg style="left:0;top:0" width="1" height="1"><rect x="221" y="99.5" width="13.5" height="4" fill="#e31010" rx="1"/></svg>
<svg style="left:0;top:0" width="1" height="1"><rect x="278.8" y="59.8" width="18.4" height="19.2" fill="#3e3e3e"/><rect x="278.8" y="86.7" width="18.4" height="19.1" fill="#3e3e3e"/><rect x="362" y="59.8" width="19" height="19.2" fill="#3e3e3e"/><rect x="263.50" y="62.50" width="12.00" height="1.2" fill="#d8d8d8"/><rect x="265.00" y="66.00" width="9.00" height="1.2" fill="#d8d8d8"/><rect x="263.50" y="69.50" width="12.00" height="1.2" fill="#d8d8d8"/><rect x="281.50" y="65.00" width="12.00" height="1.2" fill="#d8d8d8"/><rect x="283.00" y="68.50" width="9.00" height="1.2" fill="#d8d8d8"/><rect x="281.50" y="72.00" width="12.00" height="1.2" fill="#d8d8d8"/><rect x="300.00" y="68.20" width="12.40" height="1.2" fill="#d8d8d8"/><rect x="301.50" y="71.80" width="9.40" height="1.2" fill="#d8d8d8"/><rect x="300.00" y="75.30" width="12.40" height="1.2" fill="#d8d8d8"/><rect x="263.50" y="89.80" width="12.00" height="1.2" fill="#d8d8d8"/><rect x="263.50" y="93.35" width="7.00" height="1.2" fill="#d8d8d8"/><rect x="263.50" y="96.90" width="12.00" height="1.2" fill="#d8d8d8"/><rect x="263.50" y="100.45" width="7.00" height="1.2" fill="#d8d8d8"/><rect x="281.50" y="89.80" width="12.00" height="1.2" fill="#d8d8d8"/><rect x="284.00" y="93.35" width="7.00" height="1.2" fill="#d8d8d8"/><rect x="281.50" y="96.90" width="12.00" height="1.2" fill="#d8d8d8"/><rect x="284.00" y="100.45" width="7.00" height="1.2" fill="#d8d8d8"/><rect x="300.40" y="89.80" width="12.00" height="1.2" fill="#d8d8d8"/><rect x="305.40" y="93.35" width="7.00" height="1.2" fill="#d8d8d8"/><rect x="300.40" y="96.90" width="12.00" height="1.2" fill="#d8d8d8"/><rect x="305.40" y="100.45" width="7.00" height="1.2" fill="#d8d8d8"/><rect x="321.00" y="89.80" width="12.50" height="1.2" fill="#d8d8d8"/><rect x="327.00" y="93.35" width="6.50" height="1.2" fill="#d8d8d8"/><rect x="327.00" y="96.90" width="6.50" height="1.2" fill="#d8d8d8"/><rect x="321.00" y="100.45" width="12.50" height="1.2" fill="#d8d8d8"/><rect x="339.00" y="89.80" width="12.50" height="1.2" fill="#d8d8d8"/><rect x="345.00" y="93.35" width="6.50" height="1.2" fill="#d8d8d8"/><rect x="345.00" y="96.90" width="6.50" height="1.2" fill="#d8d8d8"/><rect x="339.00" y="100.45" width="12.50" height="1.2" fill="#d8d8d8"/><path d="M326 95.2h-4.5 M323.5 93l-2 2.2 2 2.2" fill="none" stroke="#4a8ad0" stroke-width="1.1"/><path d="M339.5 95.2h4.5 M342 93l2 2.2-2 2.2" fill="none" stroke="#4a8ad0" stroke-width="1.1"/><text x="319.5" y="71" font-size="10" fill="#d4d4d4" font-family="Liberation Sans" transform="rotate(-45 325 67)">ab</text><path d="M325.5 74.5l9.5-9" fill="none" stroke="#5a88b0" stroke-width="2.2"/><path d="M337.00 68.85h4.60l-2.30 2.30z" fill="#d0d0d0"/><text x="365" y="67" font-size="8" fill="#c8c8c8" font-family="Liberation Sans">ab</text><text x="364.5" y="76" font-size="8" fill="#c8c8c8" font-family="Liberation Sans">c</text><path d="M377 69.5c2 0 2.5 4 0 5h-4 M374.5 73l-1.8 1.5 1.8 1.5" fill="none" stroke="#4a8ad0" stroke-width="1.2"/><rect x="365" y="89.2" width="12.5" height="12.5" fill="#1f3550" stroke="#d0e0f0" stroke-width="1"/><path d="M365 92.5h12.5 M365 98.5h12.5" stroke="#d0e0f0" stroke-width="0.9"/><path d="M367.5 95.5h7.5" stroke="#4a8ad0" stroke-width="1.2"/><path d="M383.00 95.35h4.60l-2.30 2.30z" fill="#d0d0d0"/></svg>
<div class="a" style="left:404.80px;top:60.00px;width:109.80px;height:19.30px;background:#3a3a3a;border:1px solid #4a4a4a"></div>
<div class="t" style="left:408.00px;top:65.30px;font-size:9.60px;color:#dadada;">General</div>
<svg style="left:0;top:0" width="1" height="1"><path d="M505.50 68.85h4.60l-2.30 2.30z" fill="#d0d0d0"/><path d="M425.50 94.85h4.60l-2.30 2.30z" fill="#d0d0d0"/></svg>
<svg style="left:0;top:0" width="1" height="1"><rect x="407" y="92" width="12.5" height="8.5" fill="none" stroke="#d0d0d0" stroke-width="1"/><path d="M409.5 94.5h3v4" fill="none" stroke="#d0d0d0" stroke-width="0.9"/><path d="M414.5 97.5v4.8c0 0.8 6.5 0.8 6.5 0v-4.8" fill="#2c2c2c" stroke="#e0c860" stroke-width="1"/><ellipse cx="417.75" cy="97.5" rx="3.25" ry="1.1" fill="#2c2c2c" stroke="#e0c860" stroke-width="1"/><path d="M414.5 100c0 0.8 6.5 0.8 6.5 0" fill="none" stroke="#e0c860" stroke-width="0.8"/></svg>
<div class="t" style="left:435.80px;top:88.50px;font-size:14.50px;color:#dcdcdc;">%</div>
<div class="t" style="left:453.80px;top:92.00px;font-size:8.20px;color:#c8c8c8;letter-spacing:-0.5px">000</div>
<div class="a" style="left:474.30px;top:89.00px;width:1.00px;height:15.00px;background:#3a3a3a;"></div>
<div class="t" style="left:485.50px;top:89.50px;font-size:7.50px;color:#c8c8c8;">0</div>
<div class="t" style="left:480.00px;top:96.50px;font-size:7.50px;color:#c8c8c8;letter-spacing:-0.3px">,00</div>
<div class="t" style="left:502.00px;top:89.50px;font-size:7.50px;color:#c8c8c8;letter-spacing:-0.3px">,00</div>
<div class="t" style="left:507.00px;top:96.50px;font-size:7.50px;color:#c8c8c8;">0</div>
<svg style="left:0;top:0" width="1" height="1"><path d="M486.5 93.5h-5.5 M483 91.5l-2 2 2 2" fill="none" stroke="#4a8ad0" stroke-width="1.1"/><path d="M500 100h6 M504 98l2 2-2 2" fill="none" stroke="#4a8ad0" stroke-width="1.1"/></svg>
<svg style="left:0;top:0" width="1" height="1"><rect x="551" y="59" width="12" height="6.5" fill="#e02828"/><rect x="551" y="71.5" width="12" height="6.3" fill="#e02828"/><rect x="551" y="65.5" width="7" height="6" fill="#2f78d8"/><g stroke="#d8d8d8" stroke-width="0.9" fill="none"><rect x="547.5" y="59" width="23.5" height="18.8"/><path d="M547.5 65.5h23.5 M547.5 71.5h23.5 M551 59v18.8 M563 59v18.8 M567 59v18.8"/></g><rect x="616.6" y="66" width="17" height="11.8" fill="#2f78d8"/><g stroke="#d8d8d8" stroke-width="0.9" fill="none"><rect x="609" y="59" width="24.5" height="18.8"/><path d="M609 66h24.5 M609 72h24.5 M616.6 59v18.8 M625 59v18.8"/></g><path d="M634.5 65l-11 11" stroke="#d8d8d8" stroke-width="2.2"/><path d="M622.5 74.5c-3 0-5.5 2-5.5 5.5 3.5 0 6.5-1.5 7-4.5z" fill="#2f78d8" stroke="#9cc4f0" stroke-width="0.8"/><rect x="665" y="62" width="19" height="12" fill="#2f78d8"/><g stroke="#d8d8d8" stroke-width="0.9" fill="none"><rect x="662" y="59" width="24" height="18.8"/><path d="M662 62h24 M665 59v18.8 M662 74h24"/></g><path d="M688 65l-11 11" stroke="#d8d8d8" stroke-width="2.2"/><path d="M676 74.5c-3 0-5.5 2-5.5 5.5 3.5 0 6.5-1.5 7-4.5z" fill="#2f78d8" stroke="#9cc4f0" stroke-width="0.8"/></svg>
<div class="t" style="left:499.0px;top:85px;width:120px;text-align:center;color:#e6e6e6;font-size:10.3px;line-height:13.3px">Formato<br>condicional<span style="display:inline-block;width:0;height:0;border-left:2.3px solid transparent;border-right:2.3px solid transparent;border-top:2.5px solid #d0d0d0;vertical-align:middle;margin-left:2px;margin-bottom:1px"></span></div>
<div class="t" style="left:560.5px;top:85px;width:120px;text-align:center;color:#e6e6e6;font-size:10.3px;line-height:13.3px">Dar formato<br>como tabla<span style="display:inline-block;width:0;height:0;border-left:2.3px solid transparent;border-right:2.3px solid transparent;border-top:2.5px solid #d0d0d0;vertical-align:middle;margin-left:2px;margin-bottom:1px"></span></div>
<div class="t" style="left:614.5px;top:85px;width:120px;text-align:center;color:#e6e6e6;font-size:10.3px;line-height:13.3px">Estilos de<br>celda<span style="display:inline-block;width:0;height:0;border-left:2.3px solid transparent;border-right:2.3px solid transparent;border-top:2.5px solid #d0d0d0;vertical-align:middle;margin-left:2px;margin-bottom:1px"></span></div>
<svg style="left:0;top:0" width="1" height="1"><rect x="713" y="56.2" width="12.8" height="11.8" fill="#1e4a7a"/><g stroke="#e0e0e0" stroke-width="0.9" fill="none"><rect x="713" y="56.2" width="12.8" height="11.8"/><path d="M713 60.1h12.8 M713 64.0h12.8 M717.3 56.2v11.8 M721.5 56.2v11.8"/></g><rect x="713" y="75.2" width="12.8" height="11.8" fill="#1e4a7a"/><g stroke="#e0e0e0" stroke-width="0.9" fill="none"><rect x="713" y="75.2" width="12.8" height="11.8"/><path d="M713 79.1h12.8 M713 83.0h12.8 M717.3 75.2v11.8 M721.5 75.2v11.8"/></g><rect x="713" y="94.7" width="12.8" height="11.8" fill="#1e4a7a"/><g stroke="#e0e0e0" stroke-width="0.9" fill="none"><rect x="713" y="94.7" width="12.8" height="11.8"/><path d="M713 98.6h12.8 M713 102.5h12.8 M717.3 94.7v11.8 M721.5 94.7v11.8"/></g><path d="M720.5 79l4.5 5 M725 79l-4.5 5" stroke="#d04060" stroke-width="1.3"/><path d="M769.50 60.85h4.60l-2.30 2.30z" fill="#d0d0d0"/><path d="M772.70 80.35h4.60l-2.30 2.30z" fill="#d0d0d0"/><path d="M768.70 99.35h4.60l-2.30 2.30z" fill="#d0d0d0"/></svg>
<div class="t" style="left:728.70px;top:58.30px;font-size:10.10px;color:#e6e6e6;">Insertar</div>
<div class="t" style="left:729.00px;top:77.00px;font-size:10.10px;color:#e6e6e6;">Eliminar</div>
<div class="t" style="left:729.00px;top:96.30px;font-size:10.10px;color:#e6e6e6;">Formato</div>
<svg style="left:0;top:0" width="1" height="1"><path d="M809 57h-10.5l5.5 5.5-5.5 5.5h10.5" fill="none" stroke="#d8d8d8" stroke-width="1.2"/><rect x="797" y="75.3" width="13.5" height="11.5" fill="none" stroke="#d8d8d8" stroke-width="1"/><path d="M797 78h13.5" stroke="#d8d8d8" stroke-width="1"/><path d="M803.7 79v6 M801.5 83l2.2 2.2 2.2-2.2" stroke="#4a8ad0" fill="none" stroke-width="1.1"/><path d="M797.5 101.5l7-7 5.5 5.5-7 7z" fill="none" stroke="#b050c8" stroke-width="1.5"/><path d="M800.7 98.3l5.5 5.5" stroke="#b050c8" stroke-width="1.5"/><path d="M798 102l4 4" stroke="#b050c8" stroke-width="2.5"/><path d="M815.30 61.35h4.60l-2.30 2.30z" fill="#d0d0d0"/><path d="M813.90 80.35h4.60l-2.30 2.30z" fill="#d0d0d0"/><path d="M813.90 100.35h4.60l-2.30 2.30z" fill="#d0d0d0"/><text x="835" y="68" font-size="11" fill="#4a8ad0" font-family="Liberation Sans">A</text><text x="835.5" y="80.5" font-size="11" fill="#c8c8c8" font-family="Liberation Sans">Z</text><path d="M845 62h14.5l-5.5 6.5v7l-3.5-1.5v-5.5z" fill="none" stroke="#d8d8d8" stroke-width="1.1"/><circle cx="905.3" cy="65.6" r="9" fill="none" stroke="#d8d8d8" stroke-width="1.2"/><path d="M898.8 72l-10 9" stroke="#d8d8d8" stroke-width="1.3"/><path d="M962.6 57.2h7.5l-5.6 9.8h7.4l-16 12.5 5.1-9.2h-6.8z" fill="#1a66c8" stroke="#6ab8ff" stroke-width="1"/></svg>
<div class="t" style="left:787.0px;top:85px;width:120px;text-align:center;color:#e6e6e6;font-size:10.3px;line-height:13.3px">Ordenar y<br>filtrar<span style="display:inline-block;width:0;height:0;border-left:2.3px solid transparent;border-right:2.3px solid transparent;border-top:2.5px solid #d0d0d0;vertical-align:middle;margin-left:2px;margin-bottom:1px"></span></div>
<div class="t" style="left:841.5px;top:85px;width:120px;text-align:center;color:#e6e6e6;font-size:10.3px;line-height:13.3px">Buscar y<br>seleccionar<span style="display:inline-block;width:0;height:0;border-left:2.3px solid transparent;border-right:2.3px solid transparent;border-top:2.5px solid #d0d0d0;vertical-align:middle;margin-left:2px;margin-bottom:1px"></span></div>
<div class="t" style="left:903.00px;top:86.80px;width:120px;text-align:center;font-size:9.70px;color:#e6e6e6;">Ideas</div>
<div class="a" style="left:1.00px;top:139.20px;width:85.00px;height:21.80px;background:#363636;border:1px solid #404040"></div>
<div class="t" style="left:7.00px;top:145.30px;font-size:10.80px;color:#dcdcdc;">A1</div>
<svg style="left:0;top:0" width="1" height="1"><path d="M74.00 148.00h6.00l-3.00 3.00z" fill="#e0e0e0"/><circle cx="98.5" cy="146" r="1" fill="#d8d8d8"/><circle cx="98.5" cy="150" r="1" fill="#d8d8d8"/><circle cx="98.5" cy="154" r="1" fill="#d8d8d8"/></svg>
<div class="a" style="left:111.00px;top:139.20px;width:92.00px;height:21.80px;background:#363636;border:1px solid #3c3c3c"></div>
<svg style="left:0;top:0" width="1" height="1"><g stroke="#6a6a6a" stroke-width="1.3" fill="none"><path d="M123 145.5l8 8 M131 145.5l-8 8"/><path d="M152 150.5l3.5 3.5 6-7"/></g></svg>
<div class="t" style="left:182.50px;top:144.50px;font-size:11.50px;color:#dcdcdc;font-style:italic;font-family:"Liberation Serif",serif;font-weight:bold">f<span style="font-size:8px;font-style:normal">x</span></div>
<div class="a" style="left:206.00px;top:139.20px;width:813.00px;height:21.80px;background:#363636;border:1px solid #404040"></div>
<div class="t" style="left:216.00px;top:145.30px;font-size:10.80px;color:#e6e6e6;">Fecha</div>
<svg style="left:0;top:0" width="1" height="1"><path d="M1008.5 148l3.3 3.3 3.3-3.3" fill="none" stroke="#f0f0f0" stroke-width="1.6"/></svg>
<div class="a" style="left:1019.00px;top:130.20px;width:5.00px;height:33.00px;background:#1a1a1a;"></div>
<div class="a" style="left:1005.60px;top:161.00px;width:18.40px;height:662.00px;background:#202020;"></div>
<div class="a" style="left:1007.80px;top:171.70px;width:12.20px;height:651.00px;background:#333333;"></div>
<div class="a" style="left:1007.80px;top:183.00px;width:12.20px;height:609.80px;background:#4e4e4e;"></div>
<div class="a" style="left:1007.80px;top:171.70px;width:12.20px;height:11.20px;background:#474747;"></div>
<div class="a" style="left:1007.80px;top:812.00px;width:12.20px;height:10.60px;background:#474747;"></div>
<svg style="left:0;top:0" width="1" height="1"><path d="M1010.9 179.5h6l-3 -3z" fill="#c8c8c8"/></svg>
<svg style="left:0;top:0" width="1" height="1"><path d="M1010.90 815.00h6.00l-3.00 3.00z" fill="#c8c8c8"/></svg>
<div class="a" style="left:1020.00px;top:161.00px;width:4.00px;height:662.00px;background:#181818;"></div>
<div class="a" style="left:0.00px;top:823.00px;width:1024.00px;height:21.00px;background:#222222;"></div>
<svg style="left:0;top:0" width="1" height="1"><path d="M23 830.5l-3.5 3.5 3.5 3.5z M44 830.5l3.5 3.5-3.5 3.5z" fill="#8a8a8a"/></svg>
<div class="a" style="left:81.00px;top:823.00px;width:99.00px;height:21.00px;background:#ffffff;border-bottom:2.5px solid #1e5a3a"></div>
<div class="t" style="left:90.80px;top:828.30px;font-size:10.90px;color:#2f7650;font-weight:bold">Control horario</div>
<div class="t" style="left:191.00px;top:828.50px;font-size:10.70px;color:#e0e0e0;">Empleados</div>
<div class="a" style="left:256.00px;top:826.00px;width:1.00px;height:16.00px;background:#5a5a5a;"></div>
<div class="t" style="left:268.00px;top:828.50px;font-size:10.60px;color:#e0e0e0;">Otras fórmulas</div>
<div class="a" style="left:352.00px;top:826.00px;width:1.00px;height:16.00px;background:#5a5a5a;"></div>
<svg style="left:0;top:0" width="1" height="1"><circle cx="387" cy="834" r="6" fill="none" stroke="#e6e6e6" stroke-width="1.3"/><path d="M383.7 834h6.6 M387 830.7v6.6" stroke="#e6e6e6" stroke-width="1.3"/><circle cx="613" cy="830" r="1" fill="#ddd"/><circle cx="613" cy="834" r="1" fill="#ddd"/><circle cx="613" cy="838" r="1" fill="#ddd"/></svg>
<div class="a" style="left:627.00px;top:828.00px;width:379.00px;height:12.00px;background:#3a3a3a;"></div>
<div class="a" style="left:639.00px;top:828.00px;width:323.00px;height:12.00px;background:#555555;"></div>
<div class="a" style="left:627.00px;top:828.00px;width:11.00px;height:12.00px;background:#444444;"></div>
<div class="a" style="left:994.00px;top:828.00px;width:11.00px;height:12.00px;background:#444444;"></div>
<svg style="left:0;top:0" width="1" height="1"><path d="M635 831.5l-3 2.5 3 2.5z M998 831.5l3 2.5-3 2.5z" fill="#9a9a9a"/></svg>
<div class="a" style="left:0.00px;top:845.50px;width:1024.00px;height:17.50px;background:#2c2b2a;"></div>
<div class="a" style="left:772.60px;top:845.50px;width:31.60px;height:17.50px;background:#3a3a3a;"></div>
<svg style="left:0;top:0" width="1" height="1"><g fill="none" stroke="#dcdcdc" stroke-width="1"><rect x="782.5" y="849.5" width="10.5" height="10.5"/><path d="M782.5 853h10.5 M782.5 856.5h10.5 M786 849.5v10.5 M789.5 849.5v10.5"/><rect x="814.5" y="849.5" width="11" height="10.5"/><rect x="817" y="851.5" width="6" height="6.5"/><path d="M818.5 853.5h3 M818.5 855.5h3" stroke-width="0.8"/><rect x="846.5" y="849.5" width="11" height="10.5"/></g><rect x="848.5" y="849.5" width="3.5" height="5.5" fill="#dcdcdc"/><path d="M871.2 855.2h5 M880 855.2h83.5 M966 855.2h6.4 M969.2 852v6.4" stroke="#dcdcdc" stroke-width="1.3"/><rect x="919.8" y="850" width="5" height="9.7" fill="#f0f0f0"/></svg>
<div class="t" style="left:982.50px;top:850.80px;font-size:10.00px;color:#e0e0e0;letter-spacing:-0.45px">100 %</div>
</body></html>
